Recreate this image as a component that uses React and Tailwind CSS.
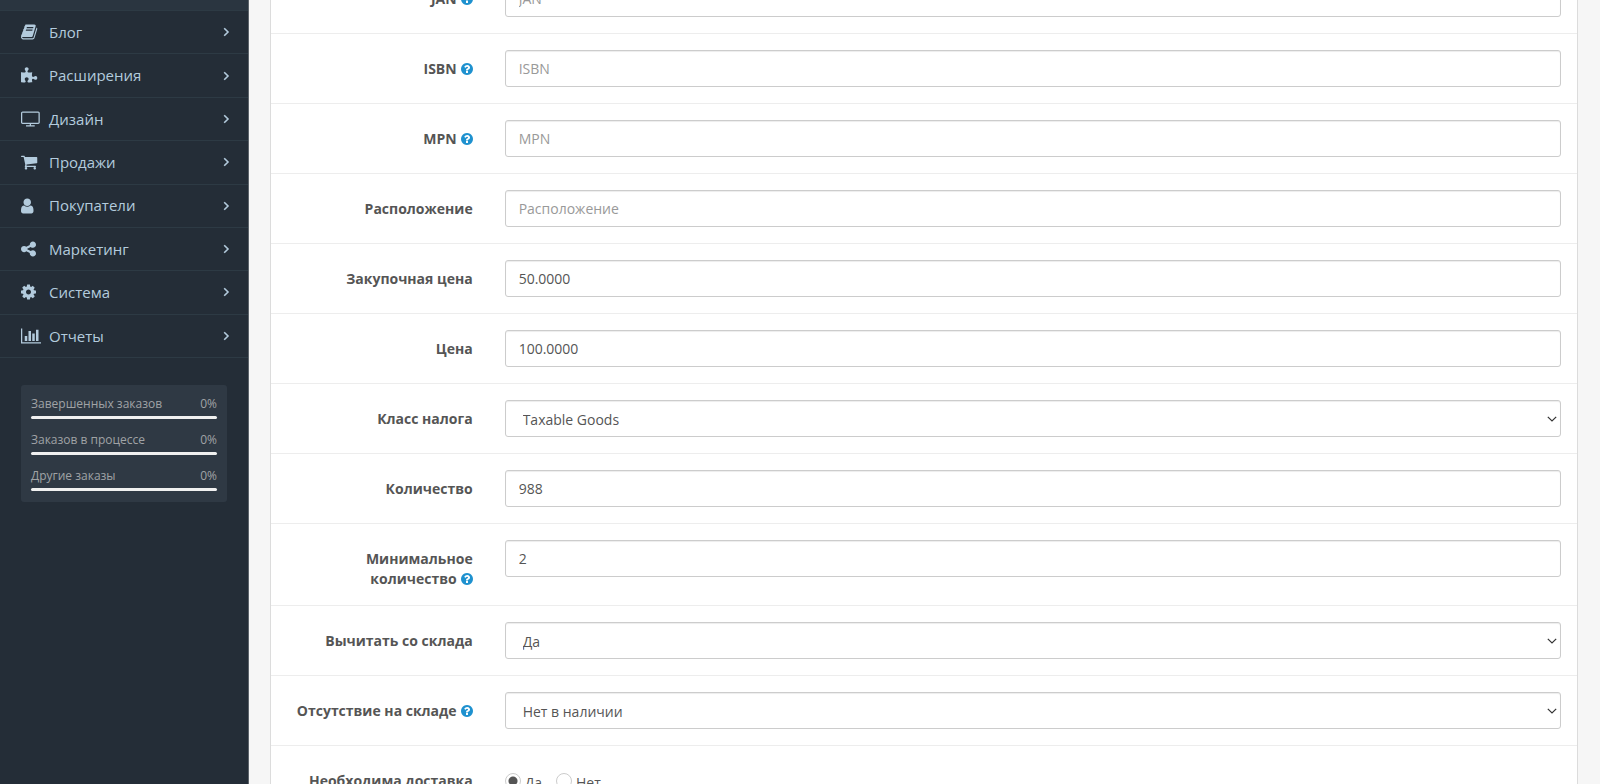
import { useState } from "react";

const icons = {
  book: {
    box: "64 0 2048 1792",
    d: "M1703 478q40 57 18 129l-275 906q-19 64-76.500 107.500t-122.500 43.500h-923q-77 0-148.500-53.500t-99.500-131.500q-24-67-2-127 0-4 3-27t4-37q1-8-3-21.500t-3-19.500q2-11 8-21t16.500-23.500 16.500-23.500q23-38 45-91.500t30-91.500q3-10 .5-30t-.5-28q3-11 17-28t17-23q21-36 42-92t25-90q1-9-2.500-32t.5-28q4-13 22-30.500t22-22.500q19-26 42.500-84.500t27.500-96.500q1-8-3-25.500t-2-26.500q2-8 9-18t18-23 17-21q8-12 16.500-30.500t15-35 16-36 19.500-32 26.500-23.500 36-11.500 47.500 5.500l-1 3q38-9 51-9h761q74 0 114 56t18 130l-274 906q-36 119-71.500 153.500t-128.500 34.500h-869q-27 0-38 15-11 16-1 43 24 70 144 70h923q29 0 56-15.500t35-41.500l300-987q7-22 5-57 38 15 59 43zm-1064 2q-4 13 2 22.500t20 9.500h608q13 0 25.500-9.500t16.500-22.500l21-64q4-13-2-22.500t-20-9.500h-608q-13 0-25.500 9.500t-16.500 22.500zm-83 256q-4 13 2 22.500t20 9.500h608q13 0 25.500-9.500t16.500-22.500l21-64q4-13-2-22.500t-20-9.500h-608q-13 0-25.500 9.500t-16.500 22.500z",
  },
  puzzle: {
    box: "90 0 2048 1792",
    d: "M1755 1098q0 81-44.500 135t-123.500 54q-41 0-77.500-17.500t-59-38-56.500-38-71-17.500q-110 0-110 124 0 39 16 115t15 115v5q-22 0-33 1-34 3-97.500 11.500t-115.500 13.500-98 5q-61 0-103-26.500t-42-83.500q0-37 17.500-71t38-56.500 38-59 17.500-77.500q0-79-54-123.500t-135-44.500q-84 0-143 45.500t-59 127.500q0 43 15 83t33.500 64.500 33.500 53 15 50.500q0 45-46 89-37 35-117 35-95 0-245-24-9-2-27.500-4t-27.500-4l-13-2q-1 0-3-1-2 0-2-1v-1024q2 1 17.500 3.500t34 5 21.500 3.500q150 24 245 24 80 0 117-35 46-44 46-89 0-22-15-50.500t-33.500-53-33.500-64.500-15-83q0-82 59-127.500t144-45.500q80 0 134 44.500t54 123.500q0 41-17.500 77.500t-38 59-38 56.500-17.500 71q0 57 42 83.500t103 26.500q64 0 180-15t163-17v2q-1 2-3.500 17.500t-5 34-3.500 21.500q-24 150-24 245 0 80 35 117 44 46 89 46 22 0 50.500-15t53-33.500 64.500-33.500 83-15q82 0 127.500 59t45.500 143z",
  },
  tv: {
    box: "0 0 2048 1792",
    d: "M1792 1248v-960q0-13-9.500-22.500t-22.500-9.500h-1600q-13 0-22.500 9.500t-9.500 22.500v960q0 13 9.500 22.500t22.500 9.500h1600q13 0 22.500-9.500t9.500-22.500zm128-960v960q0 66-47 113t-113 47h-736v128h352q14 0 23 9t9 23v64q0 14-9 23t-23 9h-832q-14 0-23-9t-9-23v-64q0-14 9-23t23-9h352v-128h-736q-66 0-113-47t-47-113v-960q0-66 47-113t113-47h1600q66 0 113 47t47 113z",
  },
  cart: {
    box: "64 0 2048 1792",
    d: "M704 1536q0 52-38 90t-90 38-90-38-38-90 38-90 90-38 90 38 38 90zm896 0q0 52-38 90t-90 38-90-38-38-90 38-90 90-38 90 38 38 90zm128-1088v512q0 24-16.500 42.500t-40.500 21.500l-1044 122q13 60 13 70 0 16-24 64h920q26 0 45 19t19 45-19 45-45 19h-1024q-26 0-45-19t-19-45q0-11 8-31.500t16-36 21.500-40 15.500-29.500l-177-823h-204q-26 0-45-19t-19-45 19-45 45-19h256q16 0 28.500 6.500t19.500 15.500 13 24.500 8 26 5.500 29.500 4.500 26h1201q26 0 45 19t19 45z",
  },
  user: {
    box: "256 0 2048 1792",
    d: "M1536 1399q0 109-62.500 187t-150.500 78h-854q-88 0-150.500-78t-62.500-187q0-85 8.500-160.500t31.500-152 58.500-131 94-89 134.500-34.500q131 128 313 128t313-128q76 0 134.500 34.500t94 89 58.500 131 31.500 152 8.500 160.500zm-256-887q0 159-112.500 271.500t-271.500 112.500-271.500-112.500-112.500-271.500 112.500-271.500 271.500-112.500 271.500 112.500 112.500 271.500z",
  },
  share: {
    box: "128 0 2048 1792",
    d: "M1344 1024q133 0 226.500 93.500t93.500 226.500-93.500 226.500-226.500 93.500-226.500-93.500-93.500-226.500q0-12 2-34l-360-180q-92 86-218 86-133 0-226.500-93.500t-93.500-226.500 93.500-226.500 226.500-93.500q126 0 218 86l360-180q-2-22-2-34 0-133 93.500-226.500t226.500-93.500 226.500 93.500 93.500 226.500-93.500 226.500-226.500 93.500q-126 0-218-86l-360 180q2 22 2 34t-2 34l360 180q92-86 218-86z",
  },
  cog: {
    box: "128 0 2048 1792",
    d: "M1152 896q0-106-75-181t-181-75-181 75-75 181 75 181 181 75 181-75 75-181zm512-109v222q0 12-8 23t-20 13l-185 28q-19 54-39 91 35 50 107 138 10 12 10 25t-9 23q-27 37-99 108t-94 71q-12 0-26-9l-138-108q-44 23-91 38-16 136-29 186-7 28-36 28h-222q-14 0-24.500-8.500t-11.500-21.500l-28-184q-49-16-90-37l-141 107q-10 9-25 9-14 0-25-11-126-114-165-168-7-10-7-23 0-12 8-23 15-21 51-66.500t54-70.500q-27-50-41-99l-183-27q-13-2-21-12.500t-8-23.500v-222q0-12 8-23t19-13l186-28q14-46 39-92-40-57-107-138-10-12-10-24 0-10 9-23 26-36 98.500-107.500t94.500-71.500q13 0 26 10l138 107q44-23 91-38 16-136 29-186 7-28 36-28h222q14 0 24.500 8.500t11.500 21.500l28 184q49 16 90 37l142-107q9-9 24-9 13 0 25 10 129 119 165 170 7 8 7 22 0 12-8 23-15 21-51 66.500t-54 70.500q26 50 41 98l183 28q13 2 21 12.500t8 23.500z",
  },
  chart: {
    box: "0 0 2048 1792",
    d: "M640 896v512h-256v-512zm384-512v1024h-256v-1024zm1024 1152v128h-2048v-1536h128v1408zm-640-896v768h-256v-768zm384-384v1152h-256v-1152z",
  },
};

const menu = [
  { label: "Блог", icon: "book" },
  { label: "Расширения", icon: "puzzle" },
  { label: "Дизайн", icon: "tv" },
  { label: "Продажи", icon: "cart" },
  { label: "Покупатели", icon: "user" },
  { label: "Маркетинг", icon: "share" },
  { label: "Система", icon: "cog" },
  { label: "Отчеты", icon: "chart" },
];

const stats = ["Завершенных заказов", "Заказов в процессе", "Другие заказы"];

const fields = [
  { id: "jan", label: "JAN", help: true, placeholder: "JAN" },
  { id: "isbn", label: "ISBN", help: true, placeholder: "ISBN" },
  { id: "mpn", label: "MPN", help: true, placeholder: "MPN" },
  { id: "location", label: "Расположение", placeholder: "Расположение" },
  { id: "cost", label: "Закупочная цена", value: "50.0000" },
  { id: "price", label: "Цена", value: "100.0000" },
  { id: "tax", label: "Класс налога", options: ["Taxable Goods"] },
  { id: "quantity", label: "Количество", value: "988" },
  { id: "minimum", label: "Минимальное количество", help: true, value: "2" },
  { id: "subtract", label: "Вычитать со склада", options: ["Да", "Нет"] },
  { id: "stock", label: "Отсутствие на складе", help: true, options: ["Нет в наличии"] },
];

const control =
  "block w-full h-[37px] rounded-[3px] border border-[#ccc] bg-white text-sm text-[#555] shadow-[inset_0_1px_1px_rgba(0,0,0,0.075)]";

const HelpIcon = () => (
  <svg viewBox="128 128 1536 1536" className="inline-block w-3 h-3 ml-1 align-[-1px] fill-[#1e91cf]">
    <path d="M1024 1376v-192q0-14-9-23t-23-9h-192q-14 0-23 9t-9 23v192q0 14 9 23t23 9h192q14 0 23-9t9-23zm256-672q0-88-55.500-163t-138.500-116-170-41q-243 0-371 213-15 24 8 42l132 100q7 6 19 6 16 0 25-12 53-68 86-92 34-24 86-24 48 0 85.500 26t37.500 59q0 38-20 61t-68 45q-63 28-115.500 86.500t-52.500 125.500v36q0 14 9 23t23 9h192q14 0 23-9t9-23q0-19 21.500-49.500t54.500-49.500q32-18 49-28.500t46-35 44.500-48 28-60.500 12.500-81zm384 192q0 209-103 385.500t-279.500 279.500-385.500 103-385.500-103-279.500-279.500-103-385.500 103-385.500 279.500-279.500 385.500-103 385.500 103 279.500 279.500 103 385.500z" />
  </svg>
);

const Sidebar = () => (
  <aside className="w-[249px] shrink-0 bg-[#242d37] border-r border-[#5d646b]">
    <div className="h-[10px] bg-[#2a3540]" />
    <nav className="grid auto-rows-fr h-[348px] border-b border-[#2d3a44]">
      {menu.map((item) => (
        <a
          key={item.label}
          href="#"
          className="flex items-center pl-[21px] pr-[18px] border-t border-[#2d3a44] text-[15px] text-[#b3cbdd] hover:bg-[#2a3540]"
        >
          <svg viewBox={icons[item.icon].box} className="w-5 h-[18px] mr-2 fill-current">
            <path d={icons[item.icon].d} />
          </svg>
          <span className="flex-1">{item.label}</span>
          <svg viewBox="0 0 8 12" className="w-2 h-3 fill-none stroke-current">
            <path d="M2.200 2.200 6 6 2.200 9.800" strokeWidth="1.600" />
          </svg>
        </a>
      ))}
    </nav>

    {/* Order stats */}
    <ul className="mt-[27px] mx-[21px] px-[10px] pt-[10px] pb-[11px] rounded-[3px] bg-[#2f3944] text-xs text-[#a0a3a6] flex flex-col gap-3">
      {stats.map((label) => (
        <li key={label}>
          <div className="flex justify-between leading-[18px]">
            <span>{label}</span>
            <span>0%</span>
          </div>
          <div className="mt-[3px] h-[3px] rounded-full bg-[#f0f0f0]" />
        </li>
      ))}
    </ul>
  </aside>
);

const Field = ({ field }) => (
  <div className="grid grid-cols-6 py-4 border-t border-[#ededed] first:border-t-0">
    <label htmlFor={field.id} className="px-4 pt-[9px] text-right text-sm leading-5 font-bold text-[#555]">
      {field.label}
      {field.help && <HelpIcon />}
    </label>
    <div className="col-span-5 px-4">
      {field.options ? (
        <div className="relative">
          <select id={field.id} className={`${control} appearance-none pl-[17px] pr-6 pt-[2px]`}>
            {field.options.map((option) => (
              <option key={option}>{option}</option>
            ))}
          </select>
          <svg viewBox="0 0 10 6" className="absolute right-1 top-4 w-[10px] h-[6px] pointer-events-none fill-none stroke-[#333]">
            <path d="M.8.8 5 5 9.200.8" strokeWidth="1.200" />
          </svg>
        </div>
      ) : (
        <input
          id={field.id}
          type="text"
          defaultValue={field.value}
          placeholder={field.placeholder}
          className={`${control} px-[13px] placeholder:text-[#999]`}
        />
      )}
    </div>
  </div>
);

const App = () => {
  const [shipping, setShipping] = useState("Да");

  return (
    <div className="flex h-screen overflow-hidden bg-[#f6f6f6] font-['Open_Sans',sans-serif]">
      <Sidebar />
      <main className="flex-1 pl-[21px] pr-[22px]">
        <form className="-mt-9 bg-white border-x border-[#dcdcdc]">
          {fields.map((field) => (
            <Field key={field.id} field={field} />
          ))}

          {/* Shipping */}
          <fieldset className="grid grid-cols-6 py-4 border-t border-[#ededed]">
            <div className="px-4 pt-[9px] text-right text-sm leading-5 font-bold text-[#555]">Необходима доставка</div>
            <div className="col-span-5 px-4 pt-[11px] flex gap-[14px]">
              {["Да", "Нет"].map((option) => (
                <label key={option} className="flex items-start gap-1 text-sm leading-5 text-[#555]">
                  <input
                    type="radio"
                    name="shipping"
                    checked={shipping === option}
                    onChange={() => setShipping(option)}
                    className="appearance-none w-4 h-4 rounded-full border border-[#ccc] bg-white checked:bg-[radial-gradient(circle,#555_4px,transparent_5px)]"
                  />
                  {option}
                </label>
              ))}
            </div>
          </fieldset>
        </form>
      </main>
    </div>
  );
};

export default App;
